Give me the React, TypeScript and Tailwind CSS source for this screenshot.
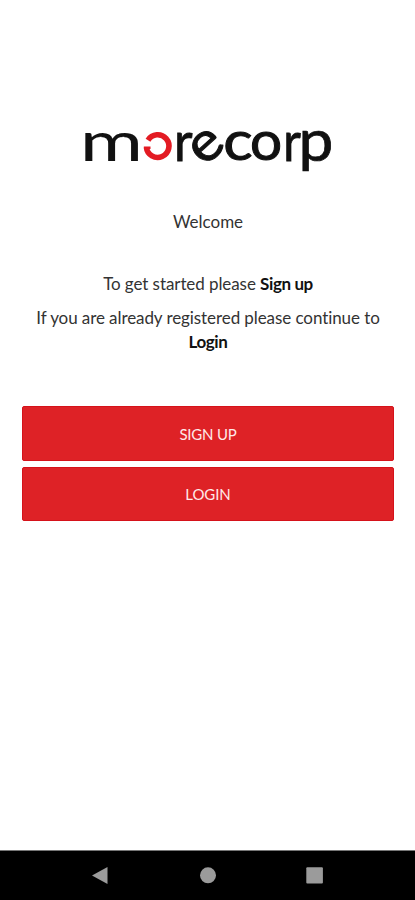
interface Letter {
  char: string
  x: number
  y: number
  sx: number
  sy: number
  weight: number
  rotate?: number
}

// Each letter is anchored on its own middle
const letters: Letter[] = [
  { char: 'm', x: 111.5, y: 160.5, sx: 1.39, sy: 1, weight: 0.1 },
  { char: 'r', x: 183.2, y: 160.5, sx: 0.93, sy: 1, weight: 0.8 },
  { char: 'e', x: 206.6, y: 146.3, sx: 1.08, sy: 1, weight: 1, rotate: -42 },
  { char: 'c', x: 238, y: 160.2, sx: 1.12, sy: 0.99, weight: 1 },
  { char: 'o', x: 266.1, y: 160.2, sx: 1.03, sy: 0.99, weight: 1 },
  { char: 'r', x: 292, y: 160.5, sx: 0.88, sy: 1, weight: 0.8 },
  { char: 'p', x: 315.8, y: 161.4, sx: 1.13, sy: 1.05, weight: 0.7 },
]

function Logo() {
  return (
    <svg
      viewBox="70 90 275 95"
      className="w-[275px] h-[95px] ml-[70px] mt-[90px] shrink-0 overflow-visible"
      aria-label="morecorp"
    >
      <g
        fill="#111111"
        stroke="#111111"
        textAnchor="middle"
        className="font-['Lato',sans-serif] text-[55px]"
      >
        {letters.map((l, i) => (
          <text
            key={i}
            y={l.rotate ? 14 : 0}
            strokeWidth={l.weight}
            transform={`translate(${l.x} ${l.y}) rotate(${l.rotate ?? 0}) scale(${l.sx} ${l.sy})`}
          >
            {l.char}
          </text>
        ))}
      </g>
      {/* Open red ring */}
      <path d="M148 140.2A11.3 11.3 0 1 1 146.4 147.2" fill="none" stroke="#e31b23" strokeWidth="5.6" />
      <path d="M143.8 146.6H150.5V149H144.2Z" fill="#e31b23" />
    </svg>
  )
}

function NavBar() {
  return (
    <div className="h-[50px] shrink-0 bg-black border-t border-[#777777]">
      <svg viewBox="0 0 415 49" className="w-full h-[49px]" fill="#9b9b9b">
        <path d="M92 24.5L107.5 16V33Z" />
        <circle cx="208" cy="24.3" r="8" />
        <rect x="306.3" y="16.2" width="16.6" height="16.4" rx="1" />
      </svg>
    </div>
  )
}

export default function App() {
  return (
    <main className="w-full h-[900px] flex flex-col bg-white overflow-hidden font-['Lato',sans-serif] text-[#333333]">
      <Logo />

      <div className="flex flex-col text-center text-[17px] leading-6 pl-[21px] pr-5 [font-variant-ligatures:none]">
        <p className="mt-[25px]">Welcome</p>
        <p className="mt-[38px] tracking-[-0.08px]">
          To get started please <span className="font-bold text-[#111111] tracking-[-0.4px]">Sign up</span>
        </p>
        <p className="mt-[10px] tracking-[-0.08px]">
          If you are already registered please continue to{' '}
          <span className="font-bold text-[#111111] tracking-[-0.4px]">Login</span>
        </p>
      </div>

      <div className="mt-[52px] pl-[22px] pr-[21px] flex flex-col gap-[6px] text-[15px] text-[#ffe9e9]">
        <button className="h-[55px] rounded-xs bg-[#de2226] border border-[#d5121a] tracking-[-0.2px] pt-0.5">
          SIGN UP
        </button>
        <button className="h-[54px] rounded-xs bg-[#de2226] border border-[#d5121a] tracking-[-0.1px]">
          LOGIN
        </button>
      </div>

      <div className="flex-1" />
      <NavBar />
    </main>
  )
}
